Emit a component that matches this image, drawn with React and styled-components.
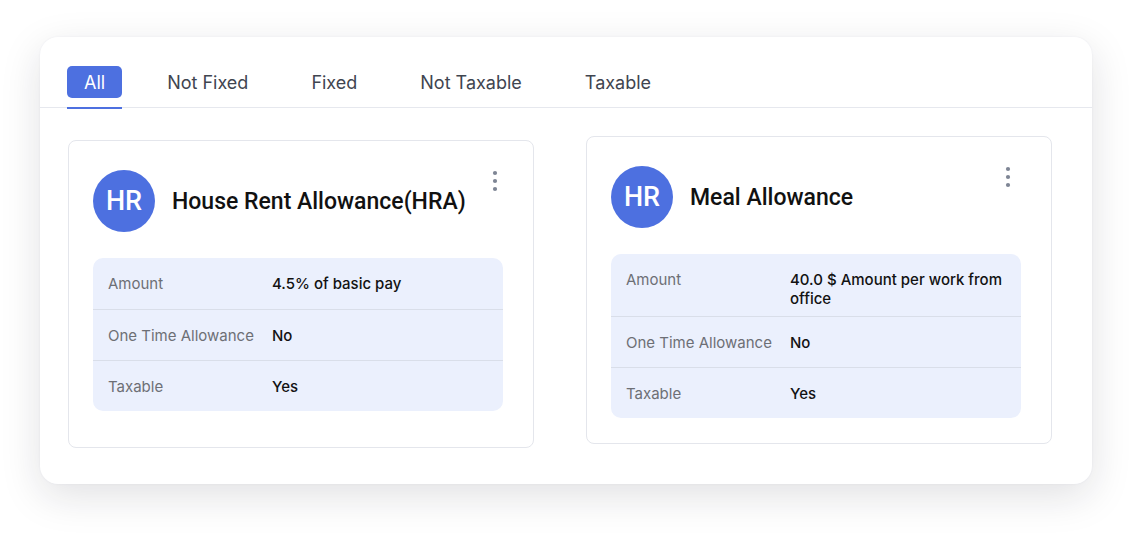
import React from 'react';
import styled, { createGlobalStyle } from 'styled-components';

const GlobalStyle = createGlobalStyle`
  body {
    margin: 0;
    background: #ffffff;
    font-family: Inter, "Noto Sans", sans-serif;
  }
`;

const Page = styled.div`
  padding: 37px 48px 52px 40px;
`;

const Panel = styled.div`
  width: 1052px;
  box-sizing: border-box;
  background: #fff;
  border-radius: 18px;
  box-shadow: 0 12px 40px rgba(20, 24, 40, 0.13), 0 0 2px rgba(60, 80, 140, 0.08);
  padding: 29px 0 36px;
`;

const Tabs = styled.div`
  display: flex;
  gap: 31px;
  padding: 0 27px;
  border-bottom: 1.5px solid #e6e8ee;
`;

const Tab = styled.div`
  position: relative;
  padding-bottom: 9px;
  margin-right: ${p => (p.$active ? '-2px' : '0')};
  &::after {
    content: '';
    position: absolute;
    left: 0;
    right: 0;
    bottom: -1.5px;
    height: 2px;
    background: ${p => (p.$active ? '#4d70e0' : 'transparent')};
  }
`;

const TabLabel = styled.div`
  height: 32px;
  display: flex;
  align-items: center;
  padding: 0 ${p => (p.$active ? '17px' : '16px')};
  border-radius: 5px;
  font-size: 18px;
  color: ${p => (p.$active ? '#fff' : '#3f4550')};
  background: ${p => (p.$active ? '#4d70e0' : 'transparent')};
`;

const Grid = styled.div`
  display: grid;
  grid-template-columns: 466px 466px;
  gap: 52px;
  padding: 28px 0 0 28px;
`;

const Card = styled.div`
  box-sizing: border-box;
  border: 1px solid #e4e6ec;
  border-radius: 8px;
  padding: 29px 30px 25px 24px;
  margin-top: ${p => (p.$shift ? '4px' : '0')};
  margin-bottom: ${p => (p.$shift ? '0' : '4px')};
`;

const Header = styled.div`
  display: flex;
  align-items: center;
  gap: 17px;
  margin-bottom: 26px;
`;

const Avatar = styled.div`
  width: 62px;
  height: 62px;
  flex-shrink: 0;
  border-radius: 50%;
  background: #4d70e0;
  color: #fff;
  display: flex;
  align-items: center;
  justify-content: center;
  font-family: Roboto, sans-serif;
  font-weight: 500;
  font-size: 27px;
`;

const Title = styled.div`
  flex: 1;
  white-space: nowrap;
  font-family: Roboto, sans-serif;
  font-weight: 500;
  font-size: 23px;
  color: #111;
`;

const Menu = styled.div`
  align-self: flex-start;
  width: 24px;
  flex-shrink: 0;
  display: flex;
  justify-content: center;
  margin-right: 1px;
`;

const Table = styled.div`
  background: #ebf0fd;
  border-radius: 10px;
`;

const Row = styled.div`
  display: grid;
  grid-template-columns: 164px 1fr;
  align-items: start;
  box-sizing: border-box;
  min-height: 51px;
  padding: 16px 15px 8px;
  line-height: 19px;
  font-size: 15px;
  & + & {
    border-top: 1px solid #d9dee9;
  }
`;

const Label = styled.div`
  color: #6d6f75;
`;

const Value = styled.div`
  color: #121212;
  font-weight: 500;
`;

const Dots = () => (
  <svg width="6" height="22" viewBox="0 0 6 22">
    <circle cx="3" cy="3" r="2.1" fill="#7e8594" />
    <circle cx="3" cy="11" r="2.1" fill="#7e8594" />
    <circle cx="3" cy="19" r="2.1" fill="#7e8594" />
  </svg>
);

const tabs = ['All', 'Not Fixed', 'Fixed', 'Not Taxable', 'Taxable'];

const cards = [
  {
    title: 'House Rent Allowance(HRA)',
    rows: [
      ['Amount', '4.5% of basic pay'],
      ['One Time Allowance', 'No'],
      ['Taxable', 'Yes'],
    ],
    shift: true,
  },
  {
    title: 'Meal Allowance',
    rows: [
      ['Amount', '40.0 $ Amount per work from office'],
      ['One Time Allowance', 'No'],
      ['Taxable', 'Yes'],
    ],
    shift: false,
  },
];

export default function App() {
  return (
    <Page>
      <GlobalStyle />
      <Panel>
        <Tabs>
          {tabs.map((t, i) => (
            <Tab key={t} $active={i === 0}>
              <TabLabel $active={i === 0}>{t}</TabLabel>
            </Tab>
          ))}
        </Tabs>
        <Grid>
          {cards.map(c => (
            <Card key={c.title} $shift={c.shift}>
              <Header>
                <Avatar>HR</Avatar>
                <Title>{c.title}</Title>
                <Menu>
                  <Dots />
                </Menu>
              </Header>
              <Table>
                {c.rows.map(([l, v]) => (
                  <Row key={l}>
                    <Label>{l}</Label>
                    <Value>{v}</Value>
                  </Row>
                ))}
              </Table>
            </Card>
          ))}
        </Grid>
      </Panel>
    </Page>
  );
}
